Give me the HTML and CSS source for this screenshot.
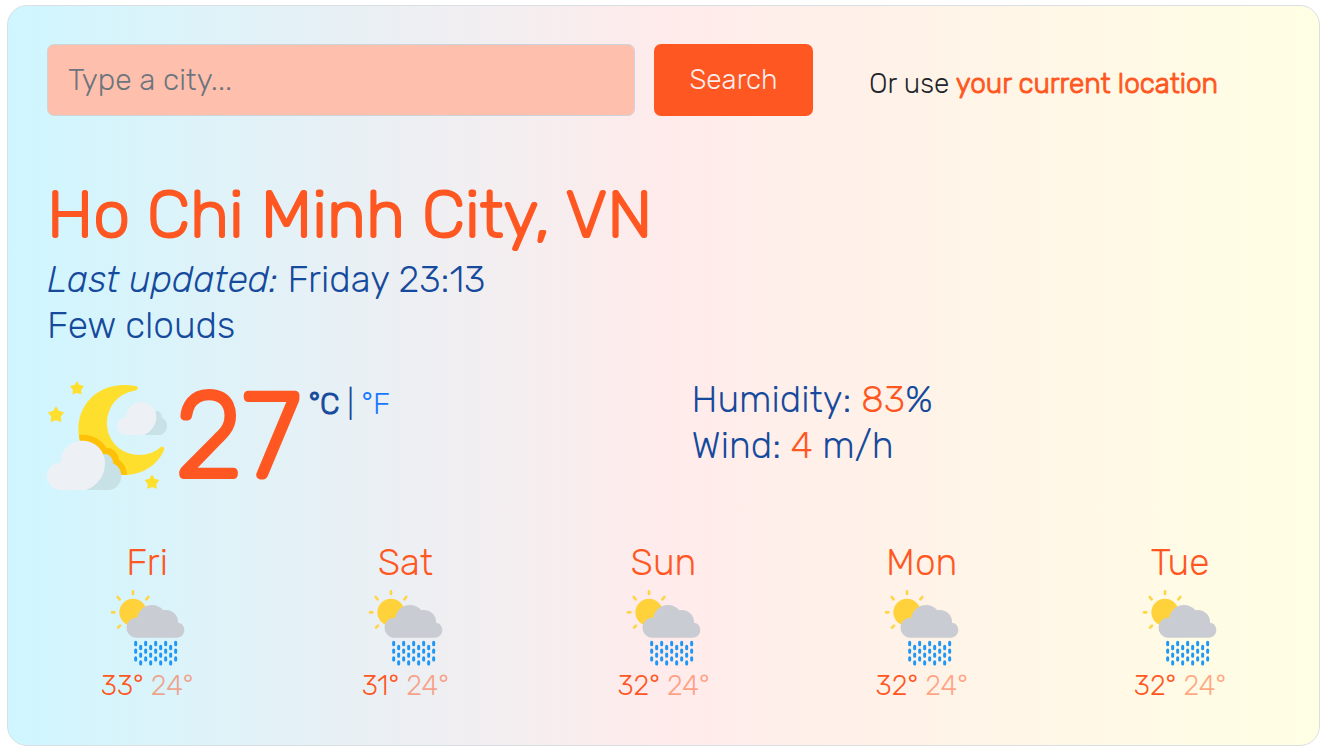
FILE: index.html
```html
<!DOCTYPE html>
<html lang="en">
<head>
<meta charset="utf-8">
<meta name="viewport" content="width=device-width, initial-scale=1">
<title>Weather</title>
<link rel="stylesheet" href="styles.css">
</head>
<body>
<svg width="0" height="0" class="sprite" aria-hidden="true">
  <symbol id="star" viewBox="0 0 46 44">
    <path d="M23 3 29 14 42 17 34 27 35 40 23 35 11 40 12 27 4 17 17 14Z" fill="#ffdf2e" stroke="#ffdf2e" stroke-width="4" stroke-linejoin="round"/>
  </symbol>
  <symbol id="rain" viewBox="57 27 231 231">
    <g stroke="#ffd545" stroke-width="8" stroke-linecap="round">
      <path d="M129 34v8M83 51l6 7M175 51l-6 7M66 97h7M84 143l6-6"/>
    </g>
    <circle cx="129" cy="97" r="41" fill="#ffd23c"/>
    <path d="M137 173A30 30 0 1 1 142 113C146 89 165 75 186 75C200 75 212 81 220 91C244 86 266 105 264 128C275 128 283 139 283 150C283 163 273 173 260 173Z" fill="#c9ccd2"/>
    <g stroke="#1f97f7" stroke-width="9" stroke-linecap="round" stroke-dasharray="7 16">
      <path d="M137 187v54M167 187v54M197 187v54M227 187v54M257 187v54"/>
      <path d="M152 199v54M182 199v54M212 199v54M242 199v54"/>
    </g>
  </symbol>
</svg>
<main class="card">
  <form class="search">
    <input class="search-input" type="text" placeholder="Type a city..." aria-label="City" autocomplete="off">
    <div class="search-side">
      <button class="search-button" type="submit">Search</button>
      <p class="locate">Or use <a href="#">your current location</a></p>
    </div>
  </form>
  <section class="overview">
    <h1>Ho Chi Minh City, VN</h1>
    <p><em>Last updated:</em> Friday 23:13</p>
    <p>Few clouds</p>
  </section>
  <section class="current">
    <div class="temperature">
      <svg class="moon" viewBox="51 18 360 360" role="img" aria-label="Few clouds">
        <path d="M317 48C329 50 324 61 313 62C263 70 231 112 231 160C231 215 275 255 327 255C353 255 376 247 391 232C397 226 405 232 402 240C383 286 336 315 282 315C203 315 145 250 145 178C145 96 214 29 317 48Z" fill="#ffdf2e"/>
        <path d="M147 195C184 191 213 207 229 233C251 234 265 249 267 269C281 278 291 295 291 314L268 315C235 308 150 260 147 195Z" fill="#ffc107"/>
        <path d="M167 360C205 340 224 294 219 253C233 248 250 261 249 280C264 286 274 301 274 319C274 343 255 360 234 360Z" fill="#c8e1e6"/>
        <path d="M92 360A41 41 0 1 1 92 278C92 240 122 212 158 212C195 212 225 242 225 278C225 316 205 345 168 360Z" fill="#edf1f5"/>
        <path d="M339 195C364 180 379 153 376 123C388 122 397 132 396 144C405 147 411 156 411 167C411 183 400 195 385 195Z" fill="#c8e1e6"/>
        <path d="M288 195A27 27 0 1 1 289 141C289 115 309 96 334 96C360 96 379 116 379 141C379 164 364 185 343 195Z" fill="#edf1f5"/>
        <use href="#star" x="118" y="33" width="46" height="42"/>
        <use href="#star" x="52" y="109" width="52" height="49"/>
        <use href="#star" x="343" y="314" width="46" height="44"/>
      </svg>
      <strong class="degrees">27</strong>
      <span class="units"><a class="unit active" href="#">°C</a> | <a class="unit" href="#">°F</a></span>
    </div>
    <div class="details">
      <p>Humidity: <span>83</span>%</p>
      <p>Wind: <span>4</span> m/h</p>
    </div>
  </section>
  <section class="forecast">
    <article class="day"><h2>Fri</h2><svg class="rain" role="img" aria-label="Rain"><use href="#rain"/></svg><p>33° <span>24°</span></p></article>
    <article class="day"><h2>Sat</h2><svg class="rain" role="img" aria-label="Rain"><use href="#rain"/></svg><p>31° <span>24°</span></p></article>
    <article class="day"><h2>Sun</h2><svg class="rain" role="img" aria-label="Rain"><use href="#rain"/></svg><p>32° <span>24°</span></p></article>
    <article class="day"><h2>Mon</h2><svg class="rain" role="img" aria-label="Rain"><use href="#rain"/></svg><p>32° <span>24°</span></p></article>
    <article class="day"><h2>Tue</h2><svg class="rain" role="img" aria-label="Rain"><use href="#rain"/></svg><p>32° <span>24°</span></p></article>
  </section>
</main>
</body>
</html>
```
FILE: styles.css
```css
* { box-sizing: border-box; }
body {
  margin: 5px 8px 5px 7px;
  background: #fff;
  color: #164a9c;
  font-family: Rubik, Roboto, sans-serif;
  font-size: 37px;
  font-weight: 300;
  line-height: 46px;
}
.sprite { position: absolute; }
h1, h2, p { margin: 0; }
a { text-decoration: none; }
.card {
  padding: 38px 10px 39px;
  border: 1px solid #dadfe3;
  border-radius: 20px;
  background: linear-gradient(to right, #cff6ff, #ffebeb 50%, #ffffe4);
}
.search, .current {
  display: grid;
  padding: 0 29px;
}
.search {
  grid-template-columns: 588fr 626fr;
  column-gap: 19px;
}
.search-input, .search-button {
  height: 72px;
  border-radius: 7px;
  font: inherit;
}
.search-input {
  width: 100%;
  padding: 0 20px;
  border: 1px solid #ced4da;
  background: #ffbfad;
  color: #212529;
  font-size: 30px;
}
.search-input::placeholder { color: #6c757d; opacity: 1; }
.search-side { display: flex; gap: 56px; }
.search-button {
  width: 159px;
  border: 0;
  background: #ff5722;
  color: #f8eeee;
  font-size: 28px;
}
.locate {
  padding-top: 17px;
  color: #212529;
  font-size: 28px;
  white-space: nowrap;
}
.locate a {
  color: #ff5722;
  -webkit-text-stroke: 1px;
}
.overview { padding: 58px 29px 0; }
.overview h1 {
  color: #ff5722;
  font-size: 66px;
  font-weight: 300;
  line-height: 82px;
  -webkit-text-stroke: 2px;
}
.current {
  grid-template-columns: 1fr 1fr;
  column-gap: 56px;
  padding-top: 28px;
}
.temperature { display: flex; }
.moon { width: 120px; height: 120px; }
.degrees {
  margin-left: 8px;
  color: #ff5722;
  font-size: 120px;
  font-weight: 300;
  line-height: 120px;
  -webkit-text-stroke: 4px;
}
.units {
  padding: 5px 0 0 8px;
  font-size: 30px;
}
.unit { color: #1677ff; }
.unit.active {
  color: #164a9c;
  -webkit-text-stroke: 1px;
}
.details span { color: #ff5722; }
.forecast {
  display: grid;
  grid-template-columns: repeat(5, 1fr);
  padding-top: 43px;
}
.day { color: #ff5722; text-align: center; }
.day h2 { font-size: 37px; font-weight: 300; line-height: 46px; }
.rain { display: block; width: 77px; height: 77px; margin: 4px auto 0; }
.day p { font-size: 28px; line-height: 40px; }
.day span { opacity: 0.5; }
```
